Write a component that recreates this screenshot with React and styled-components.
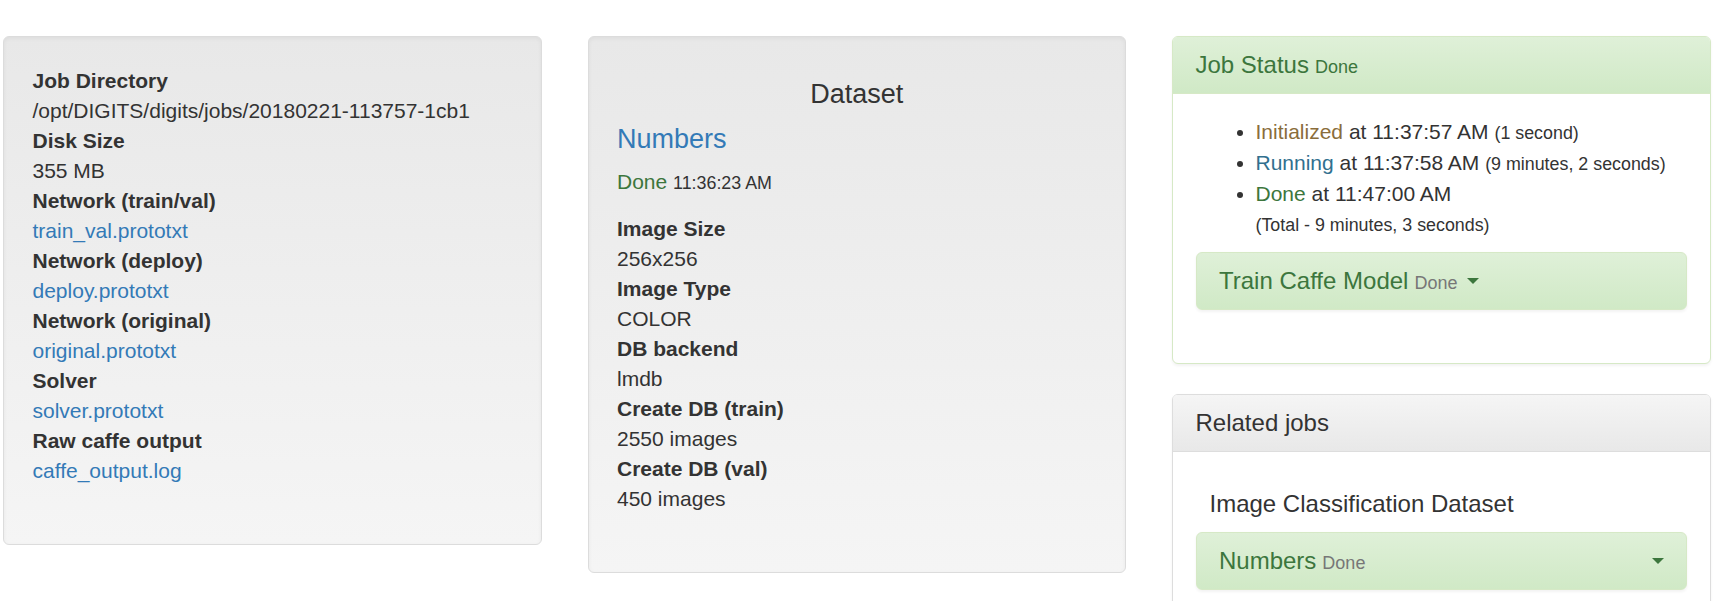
import React from 'react';
import styled, { createGlobalStyle } from 'styled-components';

const GlobalStyle = createGlobalStyle`
    body {
        margin: 0;
        background: #fff;
        font-family: "Liberation Sans", Arial, sans-serif;
        font-size: 21px;
        line-height: 30px;
        color: #333;
    }
`

const Page = styled.div`
    display: flex;
    align-items: flex-start;
    gap: 46px;
    padding: 36px 0 0 3px;
    height: 565px;
    overflow: hidden;
`

const Column = styled.div`
    flex: 0 0 538.5px;
    width: 538.5px;
`

const Well = styled.div`
    box-sizing: border-box;
    padding: 28.5px;
    border: 1.5px solid #dcdcdc;
    border-radius: 6px;
    background: linear-gradient(to bottom, #e8e8e8 0%, #f5f5f5 100%);
    box-shadow: inset 0 1.5px 4px rgba(0, 0, 0, 0.05), 0 1.5px 0 rgba(255, 255, 255, 0.1);
`

const DefList = styled.dl`
    margin: 0 0 30px;
`

const Term = styled.dt`
    font-weight: bold;
    line-height: 30px;
`

const Detail = styled.dd`
    margin: 0;
    line-height: 30px;
`

const Link = styled.a`
    color: #337ab7;
    text-decoration: none;
`

const WellTitle = styled.h4`
    margin: ${p => (p.center ? '14.5px 0 15px' : '0 0 12.5px')};
    font-size: 27px;
    font-weight: normal;
    line-height: 1.1;
    text-align: ${p => (p.center ? 'center' : 'left')};
`

const StatusLine = styled.p`
    margin: 0 0 16px;
    line-height: 30px;
`

const Status = styled.span`
    color: ${p => p.color};
`

const Small = styled.small`
    font-size: ${p => p.size || '85%'};
    color: ${p => p.color || 'inherit'};
`

const Panel = styled.div`
    margin-bottom: 30px;
    border: 1.5px solid ${p => (p.success ? '#d6e9c6' : '#dddddd')};
    border-radius: 6px;
    background: #fff;
    box-shadow: 0 1.5px 3px rgba(0, 0, 0, 0.05);
`

const PanelHeading = styled.div`
    padding: 15px 22.5px;
    border-bottom: 1.5px solid ${p => (p.success ? '#d6e9c6' : '#dddddd')};
    border-radius: 4.5px 4.5px 0 0;
    color: ${p => (p.success ? '#3c763d' : '#333')};
    background: ${p => (p.success
        ? 'linear-gradient(to bottom, #dff0d8 0%, #d0e9c6 100%)'
        : 'linear-gradient(to bottom, #f5f5f5 0%, #e8e8e8 100%)')};
`

const PanelTitle = styled.h3`
    margin: 0;
    font-size: 24px;
    font-weight: normal;
    line-height: 1.1;
    display: flex;
    align-items: baseline;
    gap: 6px;
`

const PanelBody = styled.div`
    padding: 22.5px;
`

const Timeline = styled.ul`
    margin: 0 0 12px;
    padding-left: 60px;
`

const Item = styled.li`
    line-height: 30px;
`

const SubJob = styled.div`
    margin-bottom: ${p => (p.last ? '0' : '30px')};
    padding: 15px 22.5px;
    border: 1.5px solid #d6e9c6;
    border-radius: 6px;
    color: #3c763d;
    background: linear-gradient(to bottom, #dff0d8 0%, #d0e9c6 100%);
    box-shadow: 0 1.5px 3px rgba(0, 0, 0, 0.05);
    display: flex;
    align-items: center;
    justify-content: ${p => (p.spread ? 'space-between' : 'flex-start')};
    gap: 6px;
`

const SubTitle = styled.span`
    font-size: 24px;
    line-height: 1.1;
    display: flex;
    align-items: baseline;
    gap: 6px;
`

const Caret = styled.span`
    display: inline-block;
    width: 0;
    height: 0;
    margin-left: 4px;
    border-top: 6px solid #3c763d;
    border-left: 6px solid transparent;
    border-right: 6px solid transparent;
`

const GroupTitle = styled.h4`
    margin: 16px 0 15px;
    padding-left: 14px;
    font-size: 24px;
    font-weight: normal;
    line-height: 1.1;
`

const jobInfo = [
    { label: 'Job Directory', value: '/opt/DIGITS/digits/jobs/20180221-113757-1cb1' },
    { label: 'Disk Size', value: '355 MB' },
    { label: 'Network (train/val)', value: 'train_val.prototxt', link: true },
    { label: 'Network (deploy)', value: 'deploy.prototxt', link: true },
    { label: 'Network (original)', value: 'original.prototxt', link: true },
    { label: 'Solver', value: 'solver.prototxt', link: true },
    { label: 'Raw caffe output', value: 'caffe_output.log', link: true },
];

const datasetInfo = [
    { label: 'Image Size', value: '256x256' },
    { label: 'Image Type', value: 'COLOR' },
    { label: 'DB backend', value: 'lmdb' },
    { label: 'Create DB (train)', value: '2550 images' },
    { label: 'Create DB (val)', value: '450 images' },
];

function InfoList({ items }) {
    return (
        <DefList>
            {items.map(item => (
                <React.Fragment key={item.label}>
                    <Term>{item.label}</Term>
                    <Detail>{item.link ? <Link href="#">{item.value}</Link> : item.value}</Detail>
                </React.Fragment>
            ))}
        </DefList>
    );
}

export default function App() {
    return (
        <>
            <GlobalStyle />
            <Page>
                <Column>
                    <Well>
                        <InfoList items={jobInfo} />
                    </Well>
                </Column>
                <Column>
                    <Well>
                        <WellTitle center>Dataset</WellTitle>
                        <WellTitle><Link href="#">Numbers</Link></WellTitle>
                        <StatusLine>
                            <Status color="#3c763d">Done</Status> <Small>11:36:23 AM</Small>
                        </StatusLine>
                        <InfoList items={datasetInfo} />
                    </Well>
                </Column>
                <Column>
                    <Panel success>
                        <PanelHeading success>
                            <PanelTitle>
                                Job Status <Small size="75%">Done</Small>
                            </PanelTitle>
                        </PanelHeading>
                        <PanelBody>
                            <Timeline>
                                <Item>
                                    <Status color="#8a6d3b">Initialized</Status> at 11:37:57 AM <Small>(1 second)</Small>
                                </Item>
                                <Item>
                                    <Status color="#31708f">Running</Status> at 11:37:58 AM <Small>(9 minutes, 2 seconds)</Small>
                                </Item>
                                <Item>
                                    <Status color="#3c763d">Done</Status> at 11:47:00 AM
                                    <br />
                                    <Small>(Total - 9 minutes, 3 seconds)</Small>
                                </Item>
                            </Timeline>
                            <SubJob>
                                <SubTitle>
                                    Train Caffe Model <Small size="75%" color="#777">Done</Small>
                                </SubTitle>
                                <Caret />
                            </SubJob>
                        </PanelBody>
                    </Panel>
                    <Panel>
                        <PanelHeading>
                            <PanelTitle>Related jobs</PanelTitle>
                        </PanelHeading>
                        <PanelBody>
                            <GroupTitle>Image Classification Dataset</GroupTitle>
                            <SubJob spread last>
                                <SubTitle>
                                    Numbers <Small size="75%" color="#777">Done</Small>
                                </SubTitle>
                                <Caret />
                            </SubJob>
                        </PanelBody>
                    </Panel>
                </Column>
            </Page>
        </>
    );
}
